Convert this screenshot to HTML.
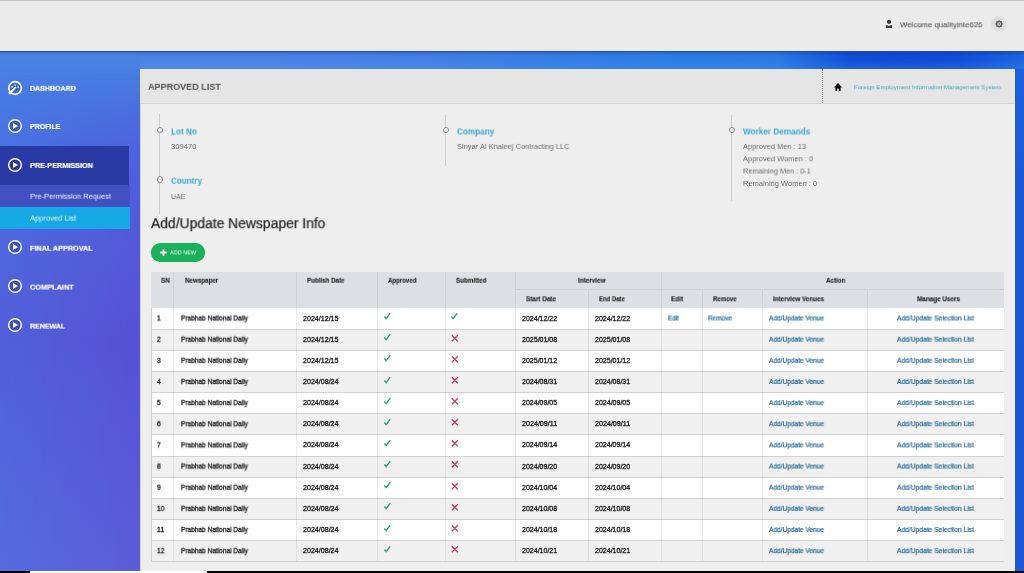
<!DOCTYPE html>
<html lang="en">
<head>
<meta charset="utf-8">
<title>Approved List</title>
<style>
*{box-sizing:border-box;margin:0;padding:0}
html,body{width:1024px;height:573px;overflow:hidden;background:#000}
body{font-family:"Liberation Sans",sans-serif;position:relative;color:#222}
a{text-decoration:none}
.abs{position:absolute}
.t{position:absolute;white-space:nowrap;line-height:1;transform-origin:0 50%;display:block;will-change:transform}
#bg{left:0;top:51px;width:1024px;height:520px;
 background:linear-gradient(90deg,#4a82e6 0,#4a7fe4 300px,#3b7de3 480px,#2e7ce3 640px,#2b7ae2 775px,#104ed6 848px,#0e49d4 905px,#104dd6 962px,#1c63de 1024px)}
#bgright{left:1015px;top:68px;width:9px;height:503px;background:linear-gradient(180deg,#1a60de 0,#1a58d6 30%,#1a57d5 70%,#1c59d8 100%);border-left:1px solid #2a58b8}
#side{left:0;top:51px;width:140px;height:520px;
 background:linear-gradient(180deg,#4a84e6 0,#4a76e2 60px,#4f69de 130px,#5560da 200px,#5858d6 290px,#5a5fd9 400px,#5f66dc 520px)}
#sideov{left:0;top:51px;width:140px;height:520px;background:linear-gradient(90deg,rgba(50,135,240,.16) 0,rgba(80,60,205,.22) 100%);-webkit-mask-image:linear-gradient(180deg,transparent 0,transparent 12px,#000 95px);mask-image:linear-gradient(180deg,transparent 0,transparent 12px,#000 95px)}
#topfade{left:0;top:51px;width:560px;height:17px;background:linear-gradient(90deg,#4a84e6 0,#4a82e6 140px,rgba(74,130,230,0) 560px)}
#hdr{left:0;top:0;width:1024px;height:51.6px;background:#ebebeb;border-top:1px solid #c4c4c4;border-bottom:1px solid #2d5fc4}
#panel{left:140px;top:68.5px;width:875px;height:502.5px;background:#eeeeee;border-left:1px solid #cfd4f4}
#tbar{left:140px;top:68.5px;width:875px;height:35px;background:#e5e5e5;border-bottom:1px solid #d4d4d4}
#botstrip{left:0;top:571px;width:1024px;height:2px;background:#000}
#botwhite{left:30px;top:571px;width:177px;height:2px;background:#fff}
#act{left:0;top:146.3px;width:129px;height:38.7px;background:#2a3aa4}
#sub1{left:0;top:185px;width:130px;height:21.5px;background:#4350c2}
#sub2{left:0;top:206.5px;width:130px;height:22.5px;background:#17a9e5}
.vl{width:1px;background:#cdcdcd}
.dot{width:6.2px;height:6.2px;border:1px solid #888;border-radius:50%;background:#eeeeee}
</style>
</head>
<body>
<div id="bg" class="abs"></div>
<div id="topfade" class="abs"></div>
<div id="side" class="abs"></div>
<div id="sideov" class="abs"></div>
<div id="bgright" class="abs"></div>
<div id="hdr" class="abs"></div>
<div class="abs" style="left:0;top:51px;width:1024px;height:5px;background:linear-gradient(180deg,rgba(10,30,120,.28),rgba(10,30,120,0))"></div>
<div class="abs" style="left:140px;top:58px;width:884px;height:11px;background:linear-gradient(180deg,rgba(90,160,245,0),rgba(90,160,245,.22))"></div>
<div id="panel" class="abs"></div>
<div class="abs" style="left:1009.5px;top:104px;width:5.5px;height:467px;background:linear-gradient(90deg,#eceeef,#eef0fb)"></div>
<div id="tbar" class="abs"></div>
<div id="botstrip" class="abs"></div>
<div id="botwhite" class="abs"></div>
<div id="act" class="abs"></div>
<div id="sub1" class="abs"></div>
<div id="sub2" class="abs"></div>

<!-- sidebar icons -->
<svg class="abs" style="left:6px;top:78.5px" width="18" height="18" viewBox="0 0 18 18"><circle cx="9.1" cy="9" r="6.3" fill="rgba(35,45,140,.25)" stroke="#fff" stroke-width="1.7"/><circle cx="9.1" cy="6" r=".85" fill="#e6edff"/><circle cx="6.1" cy="7.9" r=".85" fill="#e6edff"/><circle cx="12.1" cy="8.2" r=".85" fill="#e6edff"/><path d="M9.7 8.2 L3.5 13.2 L4.8 14.7 Z" fill="#fff" stroke="#fff" stroke-width="1.1" stroke-linejoin="round"/><circle cx="3.9" cy="14.1" r="1.35" fill="#fff"/></svg>
<svg class="abs" style="left:6px;top:117.00px" width="18" height="18" viewBox="0 0 18 18"><circle cx="9" cy="9" r="6.3" fill="rgba(35,45,140,.4)" stroke="#f6f8ff" stroke-width="1.5"/><path d="M7 6.1 L12.1 9 L7 11.9 Z" fill="#fff"/></svg><svg class="abs" style="left:6px;top:155.80px" width="18" height="18" viewBox="0 0 18 18"><circle cx="9" cy="9" r="6.3" fill="rgba(35,45,140,.4)" stroke="#f6f8ff" stroke-width="1.5"/><path d="M7 6.1 L12.1 9 L7 11.9 Z" fill="#fff"/></svg><svg class="abs" style="left:6px;top:238.30px" width="18" height="18" viewBox="0 0 18 18"><circle cx="9" cy="9" r="6.3" fill="rgba(35,45,140,.4)" stroke="#f6f8ff" stroke-width="1.5"/><path d="M7 6.1 L12.1 9 L7 11.9 Z" fill="#fff"/></svg><svg class="abs" style="left:6px;top:277.30px" width="18" height="18" viewBox="0 0 18 18"><circle cx="9" cy="9" r="6.3" fill="rgba(35,45,140,.4)" stroke="#f6f8ff" stroke-width="1.5"/><path d="M7 6.1 L12.1 9 L7 11.9 Z" fill="#fff"/></svg><svg class="abs" style="left:6px;top:316.30px" width="18" height="18" viewBox="0 0 18 18"><circle cx="9" cy="9" r="6.3" fill="rgba(35,45,140,.4)" stroke="#f6f8ff" stroke-width="1.5"/><path d="M7 6.1 L12.1 9 L7 11.9 Z" fill="#fff"/></svg>

<!-- header icons -->
<svg class="abs" style="left:884px;top:18px" width="10" height="12" viewBox="0 0 10 12"><circle cx="5" cy="3.9" r="2.15" fill="#3c3c3c"/><path d="M1.9 7.2 H3.9 L5 8.3 L6.1 7.2 H8.1 V9.9 H1.9 Z" fill="#3c3c3c"/></svg>
<div class="abs" style="left:991px;top:16.2px;width:16px;height:16px;border-radius:50%;background:#dedede;border:1px solid #e3e3e3"></div>
<svg class="abs" style="left:993px;top:18.2px" width="12" height="12" viewBox="0 0 12 12"><circle cx="6.1" cy="5.9" r="2.45" fill="none" stroke="#626262" stroke-width="1.45"/><circle cx="9.40" cy="5.90" r=".62" fill="#686868"/><circle cx="8.43" cy="8.23" r=".62" fill="#686868"/><circle cx="6.10" cy="9.20" r=".62" fill="#686868"/><circle cx="3.77" cy="8.23" r=".62" fill="#686868"/><circle cx="2.80" cy="5.90" r=".62" fill="#686868"/><circle cx="3.77" cy="3.57" r=".62" fill="#686868"/><circle cx="6.10" cy="2.60" r=".62" fill="#686868"/><circle cx="8.43" cy="3.57" r=".62" fill="#686868"/><circle cx="6.1" cy="5.9" r=".8" fill="#7a7a7a"/></svg>
<div class="abs" style="left:822px;top:69px;width:0;height:34px;border-left:1px dotted #8a8a8a"></div>
<svg class="abs" style="left:833px;top:82px" width="10" height="10" viewBox="0 0 10 10"><path d="M5 1 L9.2 5.6 H7.6 V8.9 H5.8 V6.6 H4.2 V8.9 H2.4 V5.6 H0.8 Z" fill="#000"/></svg>

<!-- info timeline -->
<div class="abs vl" style="left:159px;top:114px;height:100px"></div>
<div class="abs dot" style="left:156.7px;top:126.6px"></div>
<div class="abs dot" style="left:156.7px;top:176.4px"></div>
<div class="abs vl" style="left:445px;top:115px;height:51px"></div>
<div class="abs dot" style="left:442.5px;top:126.8px"></div>
<div class="abs vl" style="left:731px;top:115px;height:86px"></div>
<div class="abs dot" style="left:728.5px;top:126.8px"></div>

<!-- add new button -->
<div class="abs" style="left:150.6px;top:243.2px;width:54.4px;height:18.6px;border-radius:9.2px;background:#1bb05c"></div>
<svg class="abs" style="left:160px;top:248.5px" width="7" height="7" viewBox="0 0 7 7"><path d="M2.6 0.2 H4.4 V2.6 H6.8 V4.4 H4.4 V6.8 H2.6 V4.4 H0.2 V2.6 H2.6 Z" fill="#fff"/></svg>

<!-- table -->
<div class="abs" style="left:151.20px;top:271.50px;width:852.80px;height:36.00px;background:#dce0e5"></div><div class="abs" style="left:151.20px;top:307.50px;width:852.80px;height:21.15px;background:#ffffff;border-top:1px solid #ffffff"></div><div class="abs" style="left:151.20px;top:328.65px;width:852.80px;height:21.15px;background:#f0f0f0;border-top:1px solid #d2d2d2"></div><div class="abs" style="left:151.20px;top:349.80px;width:852.80px;height:21.15px;background:#ffffff;border-top:1px solid #d2d2d2"></div><div class="abs" style="left:151.20px;top:370.95px;width:852.80px;height:21.15px;background:#f0f0f0;border-top:1px solid #d2d2d2"></div><div class="abs" style="left:151.20px;top:392.10px;width:852.80px;height:21.15px;background:#ffffff;border-top:1px solid #d2d2d2"></div><div class="abs" style="left:151.20px;top:413.25px;width:852.80px;height:21.15px;background:#f0f0f0;border-top:1px solid #d2d2d2"></div><div class="abs" style="left:151.20px;top:434.40px;width:852.80px;height:21.15px;background:#ffffff;border-top:1px solid #d2d2d2"></div><div class="abs" style="left:151.20px;top:455.55px;width:852.80px;height:21.15px;background:#f0f0f0;border-top:1px solid #d2d2d2"></div><div class="abs" style="left:151.20px;top:476.70px;width:852.80px;height:21.15px;background:#ffffff;border-top:1px solid #d2d2d2"></div><div class="abs" style="left:151.20px;top:497.85px;width:852.80px;height:21.15px;background:#f0f0f0;border-top:1px solid #d2d2d2"></div><div class="abs" style="left:151.20px;top:519.00px;width:852.80px;height:21.15px;background:#ffffff;border-top:1px solid #d2d2d2"></div><div class="abs" style="left:151.20px;top:540.15px;width:852.80px;height:21.15px;background:#f0f0f0;border-top:1px solid #d2d2d2"></div><div class="abs" style="left:151.20px;top:561.30px;width:852.80px;height:1px;background:#cfcfcf"></div><div class="abs" style="left:515.75px;top:289.40px;width:488.25px;height:1px;background:#ccd1d6"></div><div class="abs" style="left:173.40px;top:271.50px;width:1px;height:36.00px;background:#cdd2d7"></div><div class="abs" style="left:173.40px;top:307.50px;width:1px;height:253.80px;background:rgba(0,0,0,.075)"></div><div class="abs" style="left:296.25px;top:271.50px;width:1px;height:36.00px;background:#cdd2d7"></div><div class="abs" style="left:296.25px;top:307.50px;width:1px;height:253.80px;background:rgba(0,0,0,.075)"></div><div class="abs" style="left:377.00px;top:271.50px;width:1px;height:36.00px;background:#cdd2d7"></div><div class="abs" style="left:377.00px;top:307.50px;width:1px;height:253.80px;background:rgba(0,0,0,.075)"></div><div class="abs" style="left:444.70px;top:271.50px;width:1px;height:36.00px;background:#cdd2d7"></div><div class="abs" style="left:444.70px;top:307.50px;width:1px;height:253.80px;background:rgba(0,0,0,.075)"></div><div class="abs" style="left:515.25px;top:271.50px;width:1px;height:36.00px;background:#cdd2d7"></div><div class="abs" style="left:515.25px;top:307.50px;width:1px;height:253.80px;background:rgba(0,0,0,.075)"></div><div class="abs" style="left:587.75px;top:289.40px;width:1px;height:18.10px;background:#cdd2d7"></div><div class="abs" style="left:587.75px;top:307.50px;width:1px;height:253.80px;background:rgba(0,0,0,.075)"></div><div class="abs" style="left:660.70px;top:271.50px;width:1px;height:36.00px;background:#cdd2d7"></div><div class="abs" style="left:660.70px;top:307.50px;width:1px;height:253.80px;background:rgba(0,0,0,.075)"></div><div class="abs" style="left:701.50px;top:289.40px;width:1px;height:18.10px;background:#cdd2d7"></div><div class="abs" style="left:701.50px;top:307.50px;width:1px;height:253.80px;background:rgba(0,0,0,.075)"></div><div class="abs" style="left:761.75px;top:289.40px;width:1px;height:18.10px;background:#cdd2d7"></div><div class="abs" style="left:761.75px;top:307.50px;width:1px;height:253.80px;background:rgba(0,0,0,.075)"></div><div class="abs" style="left:866.75px;top:289.40px;width:1px;height:18.10px;background:#cdd2d7"></div><div class="abs" style="left:866.75px;top:307.50px;width:1px;height:253.80px;background:rgba(0,0,0,.075)"></div><div class="abs" style="left:151.20px;top:307.50px;width:1px;height:253.80px;background:#cfcfcf"></div>
<svg class="abs" style="left:382.90px;top:312.10px" width="9" height="9" viewBox="0 0 9 9"><path d="M1.4 4.5 L3.1 6.6 L7.3 1.1" fill="none" stroke="#2fa180" stroke-width="1.45"/></svg><svg class="abs" style="left:449.90px;top:312.10px" width="9" height="9" viewBox="0 0 9 9"><path d="M1.4 4.5 L3.1 6.6 L7.3 1.1" fill="none" stroke="#2fa180" stroke-width="1.45"/></svg><svg class="abs" style="left:382.90px;top:333.25px" width="9" height="9" viewBox="0 0 9 9"><path d="M1.4 4.5 L3.1 6.6 L7.3 1.1" fill="none" stroke="#2fa180" stroke-width="1.45"/></svg><svg class="abs" style="left:450.70px;top:333.55px" width="9" height="9" viewBox="0 0 9 9"><path d="M0.8 1.2 L6.8 7.2 M6.8 1.2 L0.8 7.2" fill="none" stroke="#c93c5f" stroke-width="1.3"/></svg><svg class="abs" style="left:382.90px;top:354.40px" width="9" height="9" viewBox="0 0 9 9"><path d="M1.4 4.5 L3.1 6.6 L7.3 1.1" fill="none" stroke="#2fa180" stroke-width="1.45"/></svg><svg class="abs" style="left:450.70px;top:354.70px" width="9" height="9" viewBox="0 0 9 9"><path d="M0.8 1.2 L6.8 7.2 M6.8 1.2 L0.8 7.2" fill="none" stroke="#c93c5f" stroke-width="1.3"/></svg><svg class="abs" style="left:382.90px;top:375.55px" width="9" height="9" viewBox="0 0 9 9"><path d="M1.4 4.5 L3.1 6.6 L7.3 1.1" fill="none" stroke="#2fa180" stroke-width="1.45"/></svg><svg class="abs" style="left:450.70px;top:375.85px" width="9" height="9" viewBox="0 0 9 9"><path d="M0.8 1.2 L6.8 7.2 M6.8 1.2 L0.8 7.2" fill="none" stroke="#c93c5f" stroke-width="1.3"/></svg><svg class="abs" style="left:382.90px;top:396.70px" width="9" height="9" viewBox="0 0 9 9"><path d="M1.4 4.5 L3.1 6.6 L7.3 1.1" fill="none" stroke="#2fa180" stroke-width="1.45"/></svg><svg class="abs" style="left:450.70px;top:397.00px" width="9" height="9" viewBox="0 0 9 9"><path d="M0.8 1.2 L6.8 7.2 M6.8 1.2 L0.8 7.2" fill="none" stroke="#c93c5f" stroke-width="1.3"/></svg><svg class="abs" style="left:382.90px;top:417.85px" width="9" height="9" viewBox="0 0 9 9"><path d="M1.4 4.5 L3.1 6.6 L7.3 1.1" fill="none" stroke="#2fa180" stroke-width="1.45"/></svg><svg class="abs" style="left:450.70px;top:418.15px" width="9" height="9" viewBox="0 0 9 9"><path d="M0.8 1.2 L6.8 7.2 M6.8 1.2 L0.8 7.2" fill="none" stroke="#c93c5f" stroke-width="1.3"/></svg><svg class="abs" style="left:382.90px;top:439.00px" width="9" height="9" viewBox="0 0 9 9"><path d="M1.4 4.5 L3.1 6.6 L7.3 1.1" fill="none" stroke="#2fa180" stroke-width="1.45"/></svg><svg class="abs" style="left:450.70px;top:439.30px" width="9" height="9" viewBox="0 0 9 9"><path d="M0.8 1.2 L6.8 7.2 M6.8 1.2 L0.8 7.2" fill="none" stroke="#c93c5f" stroke-width="1.3"/></svg><svg class="abs" style="left:382.90px;top:460.15px" width="9" height="9" viewBox="0 0 9 9"><path d="M1.4 4.5 L3.1 6.6 L7.3 1.1" fill="none" stroke="#2fa180" stroke-width="1.45"/></svg><svg class="abs" style="left:450.70px;top:460.45px" width="9" height="9" viewBox="0 0 9 9"><path d="M0.8 1.2 L6.8 7.2 M6.8 1.2 L0.8 7.2" fill="none" stroke="#c93c5f" stroke-width="1.3"/></svg><svg class="abs" style="left:382.90px;top:481.30px" width="9" height="9" viewBox="0 0 9 9"><path d="M1.4 4.5 L3.1 6.6 L7.3 1.1" fill="none" stroke="#2fa180" stroke-width="1.45"/></svg><svg class="abs" style="left:450.70px;top:481.60px" width="9" height="9" viewBox="0 0 9 9"><path d="M0.8 1.2 L6.8 7.2 M6.8 1.2 L0.8 7.2" fill="none" stroke="#c93c5f" stroke-width="1.3"/></svg><svg class="abs" style="left:382.90px;top:502.45px" width="9" height="9" viewBox="0 0 9 9"><path d="M1.4 4.5 L3.1 6.6 L7.3 1.1" fill="none" stroke="#2fa180" stroke-width="1.45"/></svg><svg class="abs" style="left:450.70px;top:502.75px" width="9" height="9" viewBox="0 0 9 9"><path d="M0.8 1.2 L6.8 7.2 M6.8 1.2 L0.8 7.2" fill="none" stroke="#c93c5f" stroke-width="1.3"/></svg><svg class="abs" style="left:382.90px;top:523.60px" width="9" height="9" viewBox="0 0 9 9"><path d="M1.4 4.5 L3.1 6.6 L7.3 1.1" fill="none" stroke="#2fa180" stroke-width="1.45"/></svg><svg class="abs" style="left:450.70px;top:523.90px" width="9" height="9" viewBox="0 0 9 9"><path d="M0.8 1.2 L6.8 7.2 M6.8 1.2 L0.8 7.2" fill="none" stroke="#c93c5f" stroke-width="1.3"/></svg><svg class="abs" style="left:382.90px;top:544.75px" width="9" height="9" viewBox="0 0 9 9"><path d="M1.4 4.5 L3.1 6.6 L7.3 1.1" fill="none" stroke="#2fa180" stroke-width="1.45"/></svg><svg class="abs" style="left:450.70px;top:545.05px" width="9" height="9" viewBox="0 0 9 9"><path d="M0.8 1.2 L6.8 7.2 M6.8 1.2 L0.8 7.2" fill="none" stroke="#c93c5f" stroke-width="1.3"/></svg>
<div id="txt">
<div class="t" style="left:30.20px;top:84px;font-size:7.7px;color:#ffffff;font-weight:bold;-webkit-text-stroke:0.22px #ffffff;transform:translateY(0.80px) scaleX(0.9166);">DASHBOARD</div>
<div class="t" style="left:30.20px;top:123px;font-size:7.7px;color:#ffffff;font-weight:bold;-webkit-text-stroke:0.22px #ffffff;transform:translateY(0.00px) scaleX(0.9121);">PROFILE</div>
<div class="t" style="left:30.20px;top:162px;font-size:7.7px;color:#ffffff;font-weight:bold;-webkit-text-stroke:0.22px #ffffff;transform:translateY(0.00px) scaleX(0.9454);">PRE-PERMISSION</div>
<div class="t" style="left:30.40px;top:192px;font-size:8px;color:#f0f3ff;transform:translateY(0.70px) scaleX(0.9342);">Pre-Permission Request</div>
<div class="t" style="left:30.40px;top:214px;font-size:8px;color:#e6f7ff;transform:translateY(0.60px) scaleX(0.9423);">Approved List</div>
<div class="t" style="left:30.20px;top:244px;font-size:7.7px;color:#ffffff;font-weight:bold;-webkit-text-stroke:0.22px #ffffff;transform:translateY(0.70px) scaleX(0.9416);">FINAL APPROVAL</div>
<div class="t" style="left:30.20px;top:283px;font-size:7.7px;color:#ffffff;font-weight:bold;-webkit-text-stroke:0.22px #ffffff;transform:translateY(0.60px) scaleX(0.9584);">COMPLAINT</div>
<div class="t" style="left:30.20px;top:322px;font-size:7.7px;color:#ffffff;font-weight:bold;-webkit-text-stroke:0.22px #ffffff;transform:translateY(0.60px) scaleX(0.9132);">RENEWAL</div>
<div class="t" style="left:899.70px;top:21px;font-size:8px;color:#5e5e5e;-webkit-text-stroke:0.12px #5e5e5e;transform:translateY(0.20px) scaleX(0.9717);">Welcome qualityinte626</div>
<div class="t" style="left:148.40px;top:81px;font-size:9.8px;color:#505050;font-weight:bold;transform:translateY(0.80px) scaleX(0.9222);">APPROVED LIST</div>
<a class="t" style="left:854.10px;top:84px;font-size:6.1px;color:#3aa6d0;transform:translateY(0.20px) scaleX(0.9982);">Foreign Employment Information Management System</a>
<div class="t" style="left:171.00px;top:127px;font-size:9px;color:#3aa7d0;font-weight:bold;transform:translateY(0.50px) scaleX(0.9088);">Lot No</div>
<div class="t" style="left:171.00px;top:142px;font-size:7.5px;color:#6a6a6a;transform:translateY(0.90px) scaleX(1.0187);">309470</div>
<div class="t" style="left:171.00px;top:176px;font-size:9px;color:#3aa7d0;font-weight:bold;transform:translateY(0.70px) scaleX(0.8957);">Country</div>
<div class="t" style="left:171.00px;top:193px;font-size:7.5px;color:#6a6a6a;transform:translateY(0.10px) scaleX(0.9208);">UAE</div>
<div class="t" style="left:457.00px;top:127px;font-size:9px;color:#3aa7d0;font-weight:bold;transform:translateY(0.50px) scaleX(0.9070);">Company</div>
<div class="t" style="left:457.00px;top:142px;font-size:7.5px;color:#6a6a6a;transform:translateY(0.90px) scaleX(0.9948);">Sinyar Al Khaleej Contracting LLC</div>
<div class="t" style="left:743.00px;top:127px;font-size:9px;color:#3aa7d0;font-weight:bold;transform:translateY(0.50px) scaleX(0.9112);">Worker Demands</div>
<div class="t" style="left:743.00px;top:142px;font-size:7.5px;color:#6a6a6a;transform:translateY(0.90px) scaleX(0.9925);">Approved Men : 13</div>
<div class="t" style="left:743.00px;top:155px;font-size:7.5px;color:#6a6a6a;transform:translateY(0.20px) scaleX(0.9953);">Approved Women : 0</div>
<div class="t" style="left:743.00px;top:167px;font-size:7.5px;color:#6a6a6a;transform:translateY(0.50px) scaleX(0.9738);">Remaining Men : 0-1</div>
<div class="t" style="left:743.00px;top:179px;font-size:7.5px;color:#6a6a6a;transform:translateY(0.70px) scaleX(1.0019);">Remaining Women : 0</div>
<div class="t" style="left:151.30px;top:216px;font-size:14px;color:#1e1e1e;-webkit-text-stroke:0.2px #1e1e1e;transform:translateY(0.20px) scaleX(0.9915);">Add/Update Newspaper Info</div>
<div class="t" style="left:169.70px;top:249px;font-size:6.2px;color:#f4fff8;transform:translateY(0.40px) scaleX(0.8933);">ADD NEW</div>
<div class="t" style="left:161.20px;top:276px;font-size:7px;color:#1c1c1c;font-weight:bold;-webkit-text-stroke:0.12px #1c1c1c;transform:translateY(0.70px) scaleX(0.9040);">SN</div>
<div class="t" style="left:184.90px;top:276px;font-size:7px;color:#1c1c1c;font-weight:bold;-webkit-text-stroke:0.12px #1c1c1c;transform:translateY(0.70px) scaleX(0.8887);">Newspaper</div>
<div class="t" style="left:306.75px;top:276px;font-size:7px;color:#1c1c1c;font-weight:bold;-webkit-text-stroke:0.12px #1c1c1c;transform:translateY(0.70px) scaleX(0.8843);">Publish Date</div>
<div class="t" style="left:388.25px;top:276px;font-size:7px;color:#1c1c1c;font-weight:bold;-webkit-text-stroke:0.12px #1c1c1c;transform:translateY(0.70px) scaleX(0.8723);">Approved</div>
<div class="t" style="left:455.75px;top:276px;font-size:7px;color:#1c1c1c;font-weight:bold;-webkit-text-stroke:0.12px #1c1c1c;transform:translateY(0.70px) scaleX(0.8909);">Submitted</div>
<div class="t" style="left:577.50px;top:276px;font-size:7px;color:#1c1c1c;font-weight:bold;-webkit-text-stroke:0.12px #1c1c1c;transform:translateY(0.70px) scaleX(0.9058);">Interview</div>
<div class="t" style="left:826.00px;top:276px;font-size:7px;color:#1c1c1c;font-weight:bold;-webkit-text-stroke:0.12px #1c1c1c;transform:translateY(0.70px) scaleX(0.8838);">Action</div>
<div class="t" style="left:526.25px;top:295px;font-size:7px;color:#1c1c1c;font-weight:bold;-webkit-text-stroke:0.12px #1c1c1c;transform:translateY(0.30px) scaleX(0.9069);">Start Date</div>
<div class="t" style="left:599.25px;top:295px;font-size:7px;color:#1c1c1c;font-weight:bold;-webkit-text-stroke:0.12px #1c1c1c;transform:translateY(0.30px) scaleX(0.8486);">End Date</div>
<div class="t" style="left:671.25px;top:295px;font-size:7px;color:#1c1c1c;font-weight:bold;-webkit-text-stroke:0.12px #1c1c1c;transform:translateY(0.30px) scaleX(0.9067);">Edit</div>
<div class="t" style="left:712.50px;top:295px;font-size:7px;color:#1c1c1c;font-weight:bold;-webkit-text-stroke:0.12px #1c1c1c;transform:translateY(0.30px) scaleX(0.8721);">Remove</div>
<div class="t" style="left:773.00px;top:295px;font-size:7px;color:#1c1c1c;font-weight:bold;-webkit-text-stroke:0.12px #1c1c1c;transform:translateY(0.30px) scaleX(0.8977);">Interview Venues</div>
<div class="t" style="left:916.75px;top:295px;font-size:7px;color:#1c1c1c;font-weight:bold;-webkit-text-stroke:0.12px #1c1c1c;transform:translateY(0.30px) scaleX(0.9059);">Manage Users</div>
<div class="t" style="left:157.20px;top:314px;font-size:7px;color:#222222;-webkit-text-stroke:0.32px #222222;transform:translateY(0.50px) scaleX(0.9472);">1</div>
<div class="t" style="left:180.75px;top:314px;font-size:7px;color:#222222;-webkit-text-stroke:0.32px #222222;transform:translateY(0.50px) scaleX(0.9342);">Prabhab National Daily</div>
<div class="t" style="left:302.50px;top:314px;font-size:7px;color:#222222;-webkit-text-stroke:0.32px #222222;transform:translateY(0.50px) scaleX(1.0129);">2024/12/15</div>
<div class="t" style="left:522.00px;top:314px;font-size:7px;color:#222222;-webkit-text-stroke:0.32px #222222;transform:translateY(0.50px) scaleX(1.0044);">2024/12/22</div>
<div class="t" style="left:594.50px;top:314px;font-size:7px;color:#222222;-webkit-text-stroke:0.32px #222222;transform:translateY(0.50px) scaleX(1.0044);">2024/12/22</div>
<a class="t" style="left:667.50px;top:314px;font-size:7px;color:#1f6696;-webkit-text-stroke:0.22px #1f6696;transform:translateY(0.50px) scaleX(0.8912);">Edit</a>
<a class="t" style="left:708.00px;top:314px;font-size:7px;color:#1f6696;-webkit-text-stroke:0.22px #1f6696;transform:translateY(0.50px) scaleX(0.9203);">Remove</a>
<a class="t" style="left:769.00px;top:314px;font-size:7px;color:#1f6696;-webkit-text-stroke:0.22px #1f6696;transform:translateY(0.50px) scaleX(0.9357);">Add/Update Venue</a>
<a class="t" style="left:897.25px;top:314px;font-size:7px;color:#1f6696;-webkit-text-stroke:0.22px #1f6696;transform:translateY(0.50px) scaleX(0.9558);">Add/Update Selection List</a>
<div class="t" style="left:157.20px;top:335px;font-size:7px;color:#222222;-webkit-text-stroke:0.32px #222222;transform:translateY(0.65px) scaleX(0.9472);">2</div>
<div class="t" style="left:180.75px;top:335px;font-size:7px;color:#222222;-webkit-text-stroke:0.32px #222222;transform:translateY(0.65px) scaleX(0.9342);">Prabhab National Daily</div>
<div class="t" style="left:302.50px;top:335px;font-size:7px;color:#222222;-webkit-text-stroke:0.32px #222222;transform:translateY(0.65px) scaleX(1.0129);">2024/12/15</div>
<div class="t" style="left:522.00px;top:335px;font-size:7px;color:#222222;-webkit-text-stroke:0.32px #222222;transform:translateY(0.65px) scaleX(1.0044);">2025/01/08</div>
<div class="t" style="left:594.50px;top:335px;font-size:7px;color:#222222;-webkit-text-stroke:0.32px #222222;transform:translateY(0.65px) scaleX(1.0044);">2025/01/08</div>
<a class="t" style="left:769.00px;top:335px;font-size:7px;color:#1f6696;-webkit-text-stroke:0.22px #1f6696;transform:translateY(0.65px) scaleX(0.9357);">Add/Update Venue</a>
<a class="t" style="left:897.25px;top:335px;font-size:7px;color:#1f6696;-webkit-text-stroke:0.22px #1f6696;transform:translateY(0.65px) scaleX(0.9558);">Add/Update Selection List</a>
<div class="t" style="left:157.20px;top:356px;font-size:7px;color:#222222;-webkit-text-stroke:0.32px #222222;transform:translateY(0.80px) scaleX(0.9472);">3</div>
<div class="t" style="left:180.75px;top:356px;font-size:7px;color:#222222;-webkit-text-stroke:0.32px #222222;transform:translateY(0.80px) scaleX(0.9342);">Prabhab National Daily</div>
<div class="t" style="left:302.50px;top:356px;font-size:7px;color:#222222;-webkit-text-stroke:0.32px #222222;transform:translateY(0.80px) scaleX(1.0129);">2024/12/15</div>
<div class="t" style="left:522.00px;top:356px;font-size:7px;color:#222222;-webkit-text-stroke:0.32px #222222;transform:translateY(0.80px) scaleX(1.0044);">2025/01/12</div>
<div class="t" style="left:594.50px;top:356px;font-size:7px;color:#222222;-webkit-text-stroke:0.32px #222222;transform:translateY(0.80px) scaleX(1.0044);">2025/01/12</div>
<a class="t" style="left:769.00px;top:356px;font-size:7px;color:#1f6696;-webkit-text-stroke:0.22px #1f6696;transform:translateY(0.80px) scaleX(0.9357);">Add/Update Venue</a>
<a class="t" style="left:897.25px;top:356px;font-size:7px;color:#1f6696;-webkit-text-stroke:0.22px #1f6696;transform:translateY(0.80px) scaleX(0.9558);">Add/Update Selection List</a>
<div class="t" style="left:157.20px;top:377px;font-size:7px;color:#222222;-webkit-text-stroke:0.32px #222222;transform:translateY(0.95px) scaleX(0.9472);">4</div>
<div class="t" style="left:180.75px;top:377px;font-size:7px;color:#222222;-webkit-text-stroke:0.32px #222222;transform:translateY(0.95px) scaleX(0.9342);">Prabhab National Daily</div>
<div class="t" style="left:302.50px;top:377px;font-size:7px;color:#222222;-webkit-text-stroke:0.32px #222222;transform:translateY(0.95px) scaleX(1.0129);">2024/08/24</div>
<div class="t" style="left:522.00px;top:377px;font-size:7px;color:#222222;-webkit-text-stroke:0.32px #222222;transform:translateY(0.95px) scaleX(1.0044);">2024/08/31</div>
<div class="t" style="left:594.50px;top:377px;font-size:7px;color:#222222;-webkit-text-stroke:0.32px #222222;transform:translateY(0.95px) scaleX(1.0044);">2024/08/31</div>
<a class="t" style="left:769.00px;top:377px;font-size:7px;color:#1f6696;-webkit-text-stroke:0.22px #1f6696;transform:translateY(0.95px) scaleX(0.9357);">Add/Update Venue</a>
<a class="t" style="left:897.25px;top:377px;font-size:7px;color:#1f6696;-webkit-text-stroke:0.22px #1f6696;transform:translateY(0.95px) scaleX(0.9558);">Add/Update Selection List</a>
<div class="t" style="left:157.20px;top:399px;font-size:7px;color:#222222;-webkit-text-stroke:0.32px #222222;transform:translateY(0.10px) scaleX(0.9472);">5</div>
<div class="t" style="left:180.75px;top:399px;font-size:7px;color:#222222;-webkit-text-stroke:0.32px #222222;transform:translateY(0.10px) scaleX(0.9342);">Prabhab National Daily</div>
<div class="t" style="left:302.50px;top:399px;font-size:7px;color:#222222;-webkit-text-stroke:0.32px #222222;transform:translateY(0.10px) scaleX(1.0129);">2024/08/24</div>
<div class="t" style="left:522.00px;top:399px;font-size:7px;color:#222222;-webkit-text-stroke:0.32px #222222;transform:translateY(0.10px) scaleX(1.0044);">2024/09/05</div>
<div class="t" style="left:594.50px;top:399px;font-size:7px;color:#222222;-webkit-text-stroke:0.32px #222222;transform:translateY(0.10px) scaleX(1.0044);">2024/09/05</div>
<a class="t" style="left:769.00px;top:399px;font-size:7px;color:#1f6696;-webkit-text-stroke:0.22px #1f6696;transform:translateY(0.10px) scaleX(0.9357);">Add/Update Venue</a>
<a class="t" style="left:897.25px;top:399px;font-size:7px;color:#1f6696;-webkit-text-stroke:0.22px #1f6696;transform:translateY(0.10px) scaleX(0.9558);">Add/Update Selection List</a>
<div class="t" style="left:157.20px;top:420px;font-size:7px;color:#222222;-webkit-text-stroke:0.32px #222222;transform:translateY(0.25px) scaleX(0.9472);">6</div>
<div class="t" style="left:180.75px;top:420px;font-size:7px;color:#222222;-webkit-text-stroke:0.32px #222222;transform:translateY(0.25px) scaleX(0.9342);">Prabhab National Daily</div>
<div class="t" style="left:302.50px;top:420px;font-size:7px;color:#222222;-webkit-text-stroke:0.32px #222222;transform:translateY(0.25px) scaleX(1.0129);">2024/08/24</div>
<div class="t" style="left:522.00px;top:420px;font-size:7px;color:#222222;-webkit-text-stroke:0.32px #222222;transform:translateY(0.25px) scaleX(1.0198);">2024/09/11</div>
<div class="t" style="left:594.50px;top:420px;font-size:7px;color:#222222;-webkit-text-stroke:0.32px #222222;transform:translateY(0.25px) scaleX(1.0198);">2024/09/11</div>
<a class="t" style="left:769.00px;top:420px;font-size:7px;color:#1f6696;-webkit-text-stroke:0.22px #1f6696;transform:translateY(0.25px) scaleX(0.9357);">Add/Update Venue</a>
<a class="t" style="left:897.25px;top:420px;font-size:7px;color:#1f6696;-webkit-text-stroke:0.22px #1f6696;transform:translateY(0.25px) scaleX(0.9558);">Add/Update Selection List</a>
<div class="t" style="left:157.20px;top:441px;font-size:7px;color:#222222;-webkit-text-stroke:0.32px #222222;transform:translateY(0.40px) scaleX(0.9472);">7</div>
<div class="t" style="left:180.75px;top:441px;font-size:7px;color:#222222;-webkit-text-stroke:0.32px #222222;transform:translateY(0.40px) scaleX(0.9342);">Prabhab National Daily</div>
<div class="t" style="left:302.50px;top:441px;font-size:7px;color:#222222;-webkit-text-stroke:0.32px #222222;transform:translateY(0.40px) scaleX(1.0129);">2024/08/24</div>
<div class="t" style="left:522.00px;top:441px;font-size:7px;color:#222222;-webkit-text-stroke:0.32px #222222;transform:translateY(0.40px) scaleX(1.0044);">2024/09/14</div>
<div class="t" style="left:594.50px;top:441px;font-size:7px;color:#222222;-webkit-text-stroke:0.32px #222222;transform:translateY(0.40px) scaleX(1.0044);">2024/09/14</div>
<a class="t" style="left:769.00px;top:441px;font-size:7px;color:#1f6696;-webkit-text-stroke:0.22px #1f6696;transform:translateY(0.40px) scaleX(0.9357);">Add/Update Venue</a>
<a class="t" style="left:897.25px;top:441px;font-size:7px;color:#1f6696;-webkit-text-stroke:0.22px #1f6696;transform:translateY(0.40px) scaleX(0.9558);">Add/Update Selection List</a>
<div class="t" style="left:157.20px;top:462px;font-size:7px;color:#222222;-webkit-text-stroke:0.32px #222222;transform:translateY(0.55px) scaleX(0.9472);">8</div>
<div class="t" style="left:180.75px;top:462px;font-size:7px;color:#222222;-webkit-text-stroke:0.32px #222222;transform:translateY(0.55px) scaleX(0.9342);">Prabhab National Daily</div>
<div class="t" style="left:302.50px;top:462px;font-size:7px;color:#222222;-webkit-text-stroke:0.32px #222222;transform:translateY(0.55px) scaleX(1.0129);">2024/08/24</div>
<div class="t" style="left:522.00px;top:462px;font-size:7px;color:#222222;-webkit-text-stroke:0.32px #222222;transform:translateY(0.55px) scaleX(1.0044);">2024/09/20</div>
<div class="t" style="left:594.50px;top:462px;font-size:7px;color:#222222;-webkit-text-stroke:0.32px #222222;transform:translateY(0.55px) scaleX(1.0044);">2024/09/20</div>
<a class="t" style="left:769.00px;top:462px;font-size:7px;color:#1f6696;-webkit-text-stroke:0.22px #1f6696;transform:translateY(0.55px) scaleX(0.9357);">Add/Update Venue</a>
<a class="t" style="left:897.25px;top:462px;font-size:7px;color:#1f6696;-webkit-text-stroke:0.22px #1f6696;transform:translateY(0.55px) scaleX(0.9558);">Add/Update Selection List</a>
<div class="t" style="left:157.20px;top:483px;font-size:7px;color:#222222;-webkit-text-stroke:0.32px #222222;transform:translateY(0.70px) scaleX(0.9472);">9</div>
<div class="t" style="left:180.75px;top:483px;font-size:7px;color:#222222;-webkit-text-stroke:0.32px #222222;transform:translateY(0.70px) scaleX(0.9342);">Prabhab National Daily</div>
<div class="t" style="left:302.50px;top:483px;font-size:7px;color:#222222;-webkit-text-stroke:0.32px #222222;transform:translateY(0.70px) scaleX(1.0129);">2024/08/24</div>
<div class="t" style="left:522.00px;top:483px;font-size:7px;color:#222222;-webkit-text-stroke:0.32px #222222;transform:translateY(0.70px) scaleX(1.0044);">2024/10/04</div>
<div class="t" style="left:594.50px;top:483px;font-size:7px;color:#222222;-webkit-text-stroke:0.32px #222222;transform:translateY(0.70px) scaleX(1.0044);">2024/10/04</div>
<a class="t" style="left:769.00px;top:483px;font-size:7px;color:#1f6696;-webkit-text-stroke:0.22px #1f6696;transform:translateY(0.70px) scaleX(0.9357);">Add/Update Venue</a>
<a class="t" style="left:897.25px;top:483px;font-size:7px;color:#1f6696;-webkit-text-stroke:0.22px #1f6696;transform:translateY(0.70px) scaleX(0.9558);">Add/Update Selection List</a>
<div class="t" style="left:157.20px;top:504px;font-size:7px;color:#222222;-webkit-text-stroke:0.32px #222222;transform:translateY(0.85px) scaleX(0.9363);">10</div>
<div class="t" style="left:180.75px;top:504px;font-size:7px;color:#222222;-webkit-text-stroke:0.32px #222222;transform:translateY(0.85px) scaleX(0.9342);">Prabhab National Daily</div>
<div class="t" style="left:302.50px;top:504px;font-size:7px;color:#222222;-webkit-text-stroke:0.32px #222222;transform:translateY(0.85px) scaleX(1.0129);">2024/08/24</div>
<div class="t" style="left:522.00px;top:504px;font-size:7px;color:#222222;-webkit-text-stroke:0.32px #222222;transform:translateY(0.85px) scaleX(1.0044);">2024/10/08</div>
<div class="t" style="left:594.50px;top:504px;font-size:7px;color:#222222;-webkit-text-stroke:0.32px #222222;transform:translateY(0.85px) scaleX(1.0044);">2024/10/08</div>
<a class="t" style="left:769.00px;top:504px;font-size:7px;color:#1f6696;-webkit-text-stroke:0.22px #1f6696;transform:translateY(0.85px) scaleX(0.9357);">Add/Update Venue</a>
<a class="t" style="left:897.25px;top:504px;font-size:7px;color:#1f6696;-webkit-text-stroke:0.22px #1f6696;transform:translateY(0.85px) scaleX(0.9558);">Add/Update Selection List</a>
<div class="t" style="left:157.20px;top:526px;font-size:7px;color:#222222;-webkit-text-stroke:0.32px #222222;transform:translateY(0.00px) scaleX(1.0026);">11</div>
<div class="t" style="left:180.75px;top:526px;font-size:7px;color:#222222;-webkit-text-stroke:0.32px #222222;transform:translateY(0.00px) scaleX(0.9342);">Prabhab National Daily</div>
<div class="t" style="left:302.50px;top:526px;font-size:7px;color:#222222;-webkit-text-stroke:0.32px #222222;transform:translateY(0.00px) scaleX(1.0129);">2024/08/24</div>
<div class="t" style="left:522.00px;top:526px;font-size:7px;color:#222222;-webkit-text-stroke:0.32px #222222;transform:translateY(0.00px) scaleX(1.0044);">2024/10/18</div>
<div class="t" style="left:594.50px;top:526px;font-size:7px;color:#222222;-webkit-text-stroke:0.32px #222222;transform:translateY(0.00px) scaleX(1.0044);">2024/10/18</div>
<a class="t" style="left:769.00px;top:526px;font-size:7px;color:#1f6696;-webkit-text-stroke:0.22px #1f6696;transform:translateY(0.00px) scaleX(0.9357);">Add/Update Venue</a>
<a class="t" style="left:897.25px;top:526px;font-size:7px;color:#1f6696;-webkit-text-stroke:0.22px #1f6696;transform:translateY(0.00px) scaleX(0.9558);">Add/Update Selection List</a>
<div class="t" style="left:157.20px;top:547px;font-size:7px;color:#222222;-webkit-text-stroke:0.32px #222222;transform:translateY(0.15px) scaleX(0.9363);">12</div>
<div class="t" style="left:180.75px;top:547px;font-size:7px;color:#222222;-webkit-text-stroke:0.32px #222222;transform:translateY(0.15px) scaleX(0.9342);">Prabhab National Daily</div>
<div class="t" style="left:302.50px;top:547px;font-size:7px;color:#222222;-webkit-text-stroke:0.32px #222222;transform:translateY(0.15px) scaleX(1.0129);">2024/08/24</div>
<div class="t" style="left:522.00px;top:547px;font-size:7px;color:#222222;-webkit-text-stroke:0.32px #222222;transform:translateY(0.15px) scaleX(1.0044);">2024/10/21</div>
<div class="t" style="left:594.50px;top:547px;font-size:7px;color:#222222;-webkit-text-stroke:0.32px #222222;transform:translateY(0.15px) scaleX(1.0044);">2024/10/21</div>
<a class="t" style="left:769.00px;top:547px;font-size:7px;color:#1f6696;-webkit-text-stroke:0.22px #1f6696;transform:translateY(0.15px) scaleX(0.9357);">Add/Update Venue</a>
<a class="t" style="left:897.25px;top:547px;font-size:7px;color:#1f6696;-webkit-text-stroke:0.22px #1f6696;transform:translateY(0.15px) scaleX(0.9558);">Add/Update Selection List</a>
</div>
</body>
</html>
